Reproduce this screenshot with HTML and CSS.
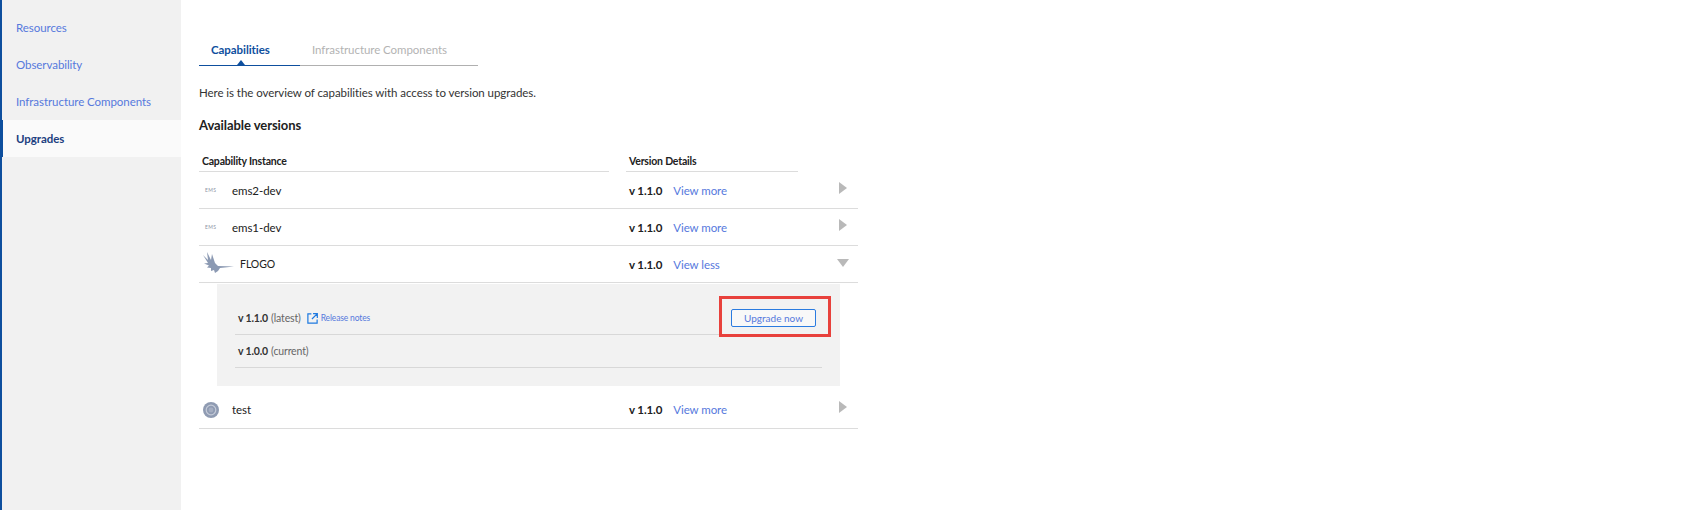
FILE: index.html
```html
<!DOCTYPE html>
<html lang="en">
<head>
<meta charset="utf-8">
<title>Upgrades</title>
<link rel="stylesheet" href="styles.css">
</head>
<body>
<div class="app">
  <nav class="sidebar">
    <a class="nav-item">Resources</a>
    <a class="nav-item">Observability</a>
    <a class="nav-item">Infrastructure Components</a>
    <a class="nav-item active">Upgrades</a>
  </nav>
  <main class="main">
    <div class="tabs">
      <div class="tab active">Capabilities</div>
      <div class="tab">Infrastructure Components</div>
    </div>
    <p class="intro">Here is the overview of capabilities with access to version upgrades.</p>
    <h2 class="title">Available versions</h2>
    <div class="table">
      <div class="head">
        <div class="head-cell first">Capability Instance</div>
        <div class="head-cell second">Version Details</div>
      </div>
      <div class="row">
        <div class="name"><span class="logo ems">EMS</span><span>ems2-dev</span></div>
        <div class="ver"><b>v 1.1.0</b><a class="link">View more</a></div>
        <span class="arrow right"></span>
      </div>
      <div class="row">
        <div class="name"><span class="logo ems">EMS</span><span>ems1-dev</span></div>
        <div class="ver"><b>v 1.1.0</b><a class="link">View more</a></div>
        <span class="arrow right"></span>
      </div>
      <div class="row">
        <div class="name">
          <span class="logo bird">
            <svg width="40" height="26" viewBox="0 0 40 26"><path fill="#8c9ab3" d="M2 4l5 5-1-8 4 8 1-6 3 9 3 3 16 .5-14 1.500-2 3-3 2-1-3-3 1 0-3-4-.5 2-2-5-2 4-.5z"/></svg>
          </span>
          <span class="flogo">FLOGO</span>
        </div>
        <div class="ver"><b>v 1.1.0</b><a class="link">View less</a></div>
        <span class="arrow down"></span>
      </div>
      <div class="panel">
        <div class="panel-row">
          <div class="panel-text"><b>v 1.1.0</b> (latest)
            <svg class="ext" width="11" height="11" viewBox="0 0 10 10"><path fill="none" stroke="#1f7ae0" stroke-width="1.100" d="M4 .800H.800v8.400h8.400V6M5.500 .600h3.900v3.900M9.400 .600L4.500 5.500"/></svg>
            <a class="notes">Release notes</a>
          </div>
          <button class="upgrade" type="button">Upgrade now</button>
          <span class="highlight"></span>
        </div>
        <div class="panel-row second-row">
          <div class="panel-text"><b>v 1.0.0</b> (current)</div>
        </div>
      </div>
      <div class="row last">
        <div class="name">
          <span class="logo ring">
            <svg width="16" height="16" viewBox="0 0 16 16"><circle cx="8" cy="8" r="8" fill="#8f9bb2"/><circle cx="8" cy="8" r="4.800" fill="none" stroke="#c5cbd8" stroke-width="1.200"/><circle cx="8" cy="8" r="2.400" fill="#a5aec1"/></svg>
          </span>
          <span>test</span>
        </div>
        <div class="ver"><b>v 1.1.0</b><a class="link">View more</a></div>
        <span class="arrow right"></span>
      </div>
    </div>
  </main>
</div>
</body>
</html>
```

FILE: styles.css
```css
* { box-sizing: border-box; }
html, body { margin: 0; height: 100%; background: #fff; }
body { font-family: "Lato", "Noto Sans", sans-serif; color: #212121; font-size: 11.5px; letter-spacing: -.06px; }
.app { display: flex; height: 510px; }
.sidebar {
  width: 181px; background: #f1f1f1; border-left: 2px solid #0e4f9e;
  padding-top: 9px; flex: none; display: flex; flex-direction: column;
}
.nav-item {
  height: 37px; padding-left: 14px; display: flex; align-items: center;
  color: #5679dd;
}
.nav-item.active {
  background: #fafafa; color: #1c3f80; font-weight: 700;
  margin-left: -2px; padding-left: 13px; border-left: 3px solid #0e4f9e;
}
.main { padding: 34px 0 0 18px; flex: 1; }
.tabs { display: flex; width: 279px; height: 32px; }
.tab {
  padding: 9px 0 0 12px; height: 32px; color: #b3b3b3; font-size: 11.5px;
  border-bottom: 1px solid #b0b0b0; flex: 1; position: relative;
}
.tab.active {
  flex: none; width: 101px; color: #0e4f9e; border-bottom-color: #0e4f9e;
  font-weight: 700;
}
.tab.active::after {
  content: ""; position: absolute; left: 38px; bottom: 0;
  border: 4px solid transparent; border-top: 0; border-bottom: 5px solid #0e4f9e;
}
.intro { margin: 19px 0 0; line-height: 16px; color: #333; }
.title { margin: 15px 0 0; font-size: 13px; line-height: 18px; font-weight: 700; color: #212121; }
.table { width: 659px; margin-top: 12px; }
.head { display: flex; height: 26px; font-size: 10.5px; letter-spacing: -.2px; font-weight: 700; }
.head-cell { border-bottom: 1px solid #dcdcdc; line-height: 16px; padding-top: 7px; }
.head-cell.first { width: 410px; padding-left: 3px; }
.head-cell.second { width: 172px; margin-left: 17px; padding-left: 3px; }
.row {
  display: flex; align-items: center; height: 37px; border-bottom: 1px solid #dcdcdc;
  position: relative;
}
.name { width: 430px; display: flex; align-items: center; }
.logo { width: 33px; flex: none; }
.ems { font-size: 5px; color: #8c94a3; padding-left: 6px; letter-spacing: .3px; }
.bird { width: 41px; height: 26px; margin-right: -3px; }
.bird svg { display: block; margin-left: 2px; }
.flogo { font-size: 10.5px; margin-left: 3px; }
.ring { padding-left: 4px; height: 16px; }
.ring svg { display: block; }
.ver { display: flex; align-items: center; gap: 11px; }
.ver b { font-weight: 700; letter-spacing: -.12px; }
.link { color: #5679dd; }
.arrow { position: absolute; width: 0; height: 0; border-style: solid; border-color: transparent; }
.arrow.right { right: 11px; top: 10px; border-width: 6px 0 6px 8px; border-left-color: #b9b9b9; }
.arrow.down { right: 9px; top: 13px; border-width: 8px 6px 0 6px; border-top-color: #b9b9b9; }
.panel {
  margin-left: 18px; width: 623px; height: 102px; background: #f2f2f2;
  padding: 18px 18px 0; margin-bottom: 5px; margin-top: 1px;
}
.panel-row {
  height: 33px; border-bottom: 1px solid #d8d8d8; display: flex; align-items: center;
  justify-content: space-between; position: relative; padding: 0 6px 0 3px;
}
.panel-text { color: #666; font-size: 10.5px; letter-spacing: -.15px; display: flex; align-items: center; gap: 3px; }
.panel-text b { color: #333; font-weight: 700; }
.ext { margin-left: 3px; }
.notes { color: #5679dd; font-size: 8.5px; }
.upgrade {
  width: 85px; height: 18px; padding: 0; background: #f8f8f8; border: 1px solid #2a7be0;
  border-radius: 2px; color: #5679dd; font: 10px "Lato", sans-serif;
}
.highlight {
  position: absolute; left: 484px; top: -6px; width: 112px; height: 41px;
  border: 3px solid #e8413c;
}
.row.last { height: 38px; }
```
